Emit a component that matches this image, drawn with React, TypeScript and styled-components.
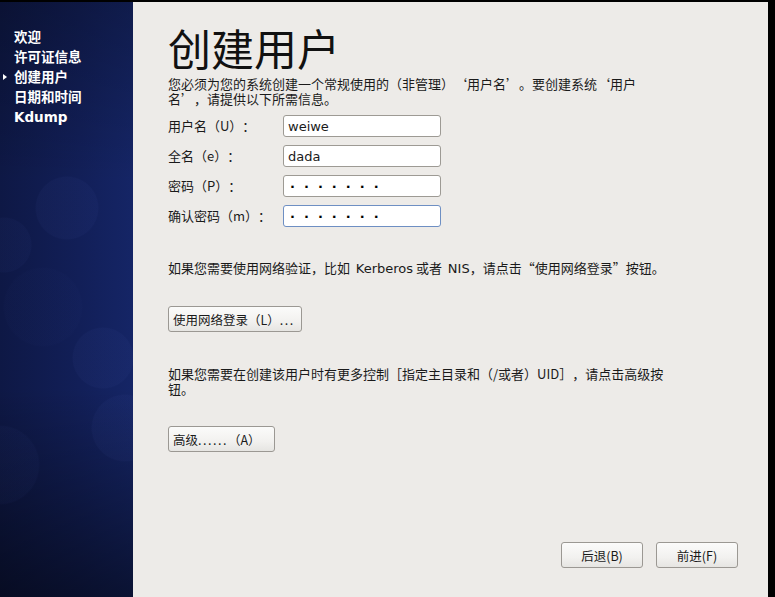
import React from "react";
import styled, { createGlobalStyle } from "styled-components";

const GlobalStyle = createGlobalStyle`
  html, body {
    margin: 0;
    padding: 0;
    background: #000;
  }
  body {
    font-family: "Noto Sans CJK SC", "DejaVu Sans", sans-serif;
  }
`;

const Screen = styled.div`
  width: 775px;
  height: 597px;
  display: flex;
  box-sizing: border-box;
  border-top: 2px solid #000;
  border-right: 7px solid #000;
  overflow: hidden;
`;

const Sidebar = styled.nav`
  width: 133px;
  flex-shrink: 0;
  padding-top: 25px;
  box-sizing: border-box;
  background:
    radial-gradient(circle 32px at 67px 206px, rgba(90, 110, 200, 0.05) 96%, transparent 100%),
    radial-gradient(circle 28px at 4px 243px, rgba(90, 110, 200, 0.045) 96%, transparent 100%),
    radial-gradient(circle 40px at 43px 305px, rgba(90, 110, 200, 0.02) 96%, transparent 100%),
    radial-gradient(circle 31px at 103px 356px, rgba(90, 110, 200, 0.05) 96%, transparent 100%),
    radial-gradient(circle 34px at 125px 426px, rgba(90, 110, 200, 0.05) 96%, transparent 100%),
    radial-gradient(circle 40px at 0px 463px, rgba(90, 110, 200, 0.04) 96%, transparent 100%),
    linear-gradient(180deg, rgba(0, 0, 0, 0.25) 0%, rgba(0, 0, 0, 0) 30%, rgba(0, 0, 0, 0) 65%, rgba(0, 0, 0, 0.5) 100%),
    linear-gradient(90deg, #0e1845 0%, #121f58 60%, #152566 100%);
`;

const NavItem = styled.div<{ $active?: boolean }>`
  position: relative;
  height: 20px;
  line-height: 20px;
  padding-left: 14px;
  color: #fff;
  font-weight: bold;
  font-size: 13.5px;
  font-family: "DejaVu Sans", "Noto Sans CJK SC", sans-serif;

  &::before {
    content: "";
    display: ${({ $active }) => ($active ? "block" : "none")};
    position: absolute;
    left: 3px;
    top: 7px;
    border-left: 4px solid #fff;
    border-top: 3px solid transparent;
    border-bottom: 3px solid transparent;
  }
`;

const Content = styled.main`
  flex: 1;
  background: #edebe8;
  padding: 0 0 29px 35px;
  display: flex;
  flex-direction: column;
  color: #1a1a1a;
  font-size: 13px;
  text-spacing-trim: space-all;
`;

const Title = styled.h1`
  margin: 18px 0 0 0;
  font-family: "Noto Sans CJK SC", sans-serif;
  font-weight: 400;
  font-size: 43px;
  line-height: 55px;
  letter-spacing: 0px;
  color: #111;
`;

const Para = styled.p<{ $top: number }>`
  margin: ${({ $top }) => $top}px 0 0 0;
  width: 500px;
  line-height: 15px;
`;

const Latin = styled.span`
  font-family: "DejaVu Sans", sans-serif;
`;

const Form = styled.div`
  margin-top: 9px;
  display: grid;
  grid-template-columns: 115px 158px;
  row-gap: 8px;
  align-items: center;
`;

const Label = styled.label`
  line-height: 22px;
`;

const Field = styled.input<{ $focused?: boolean }>`
  box-sizing: border-box;
  width: 158px;
  height: 22px;
  margin: 0;
  padding: 0 4px;
  border: 1px solid ${({ $focused }) => ($focused ? "#6e8fc3" : "#9d9a94")};
  border-radius: 3px;
  background: #fff;
  font-family: "DejaVu Sans", sans-serif;
  font-size: 13px;
  color: #1a1a1a;
  outline: none;
`;

const Secret = styled(Field)`
  letter-spacing: 9px;
  padding-left: 6px;
  color: #000;
  font-weight: bold;
`;

const Button = styled.button<{ $top?: number; $width?: number }>`
  box-sizing: border-box;
  margin-top: ${({ $top }) => $top ?? 0}px;
  width: ${({ $width }) => ($width ? `${$width}px` : "auto")};
  align-self: flex-start;
  height: 26px;
  padding: 0 4px;
  border: 1px solid #9b9893;
  border-radius: 3px;
  background: linear-gradient(180deg, #fbfbfa 0%, #f2f1ef 60%, #e6e5e2 100%);
  font-family: "Noto Sans CJK SC", "DejaVu Sans", sans-serif;
  font-size: 12.5px;
  color: #1a1a1a;
  text-align: left;
  white-space: nowrap;
  text-spacing-trim: space-all;
`;

const Dots = styled.span`
  letter-spacing: 1.5px;
`;

const Footer = styled.div`
  margin-top: auto;
  display: flex;
  justify-content: flex-end;
  gap: 13px;
  padding-right: 30px;
`;

const NavButton = styled(Button)`
  width: 82px;
  text-align: center;
`;

const steps = ["欢迎", "许可证信息", "创建用户", "日期和时间", "Kdump"];

export default function App() {
  return (
    <>
      <GlobalStyle />
      <Screen lang="zh-CN">
        <Sidebar>
          {steps.map((s) => (
            <NavItem key={s} $active={s === "创建用户"}>
              {s}
            </NavItem>
          ))}
        </Sidebar>
        <Content>
          <Title>创建用户</Title>
          <Para $top={1}>
            您必须为您的系统创建一个常规使用的（非管理）‘用户名’。要创建系统‘用户名’，请提供以下所需信息。
          </Para>
          <Form>
            <Label>用户名（U）：</Label>
            <Field readOnly value="weiwe" />
            <Label>全名（e）：</Label>
            <Field readOnly value="dada" />
            <Label>密码（P）：</Label>
            <Secret readOnly value="·······" />
            <Label>确认密码（m）：</Label>
            <Secret readOnly $focused value="·······" />
          </Form>
          <Para $top={33}>
            如果您需要使用网络验证，比如&nbsp; <Latin>Kerberos</Latin> 或者&nbsp; <Latin>NIS</Latin>，请点击“使用网络登录”按钮。
          </Para>
          <Button $top={30} $width={134}>
            使用网络登录（L）<Dots>...</Dots>
          </Button>
          <Para $top={34}>
            如果您需要在创建该用户时有更多控制［指定主目录和（/或者）UID］，请点击高级按钮。
          </Para>
          <Button $top={30} $width={107}>
            高级<Dots>......</Dots>（A）
          </Button>
          <Footer>
            <NavButton>后退(B)</NavButton>
            <NavButton>前进(F)</NavButton>
          </Footer>
        </Content>
      </Screen>
    </>
  );
}
